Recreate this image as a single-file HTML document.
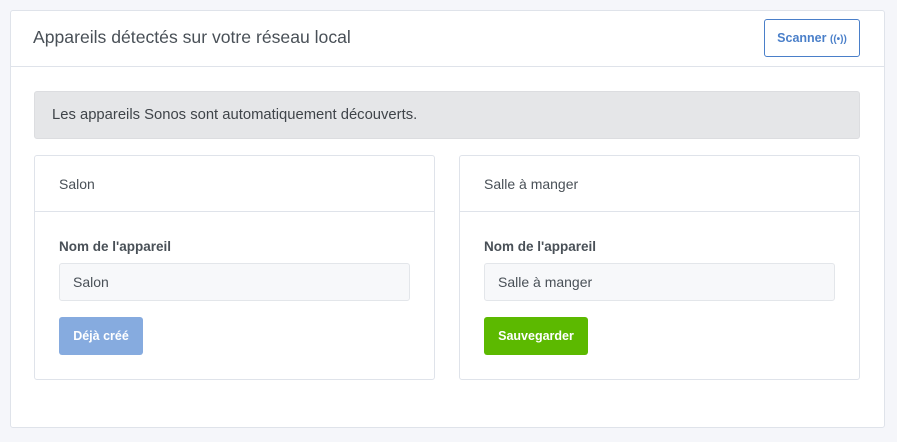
<!DOCTYPE html><html><head><style>
*{box-sizing:border-box;margin:0;padding:0}
body{width:897px;height:442px;background:#f5f6fa;font-family:"Liberation Sans",sans-serif;color:#495057;position:relative;overflow:hidden}
.a{position:absolute}
.card{left:10px;top:10px;width:875px;height:418px;background:#fff;border:1px solid #dfe3ea;border-radius:3px}
.hd{left:0;top:0;width:873px;height:56px;border-bottom:1px solid #dfe3ea}
.title{left:22px;top:16px;font-size:17.6px;color:#495057}
.scan{left:753px;top:8px;width:96px;height:38px;border:1px solid #4a7fc9;border-radius:3px;color:#4a7fc9;font-size:12.5px;font-weight:bold;line-height:36px;text-align:center}
.alert{left:23px;top:80px;width:826px;height:48px;background:#e5e6e8;border:1px solid #dcdde0;border-radius:3px;font-size:14.8px;line-height:46px;padding-left:17px;color:#3f4449}
.dc{top:144px;width:401px;height:225px;border:1px solid #dfe3ea;border-radius:3px}
.dh{left:0;top:0;width:399px;height:56px;border-bottom:1px solid #dfe3ea;font-size:14px;padding:20px 0 0 24px}
.lb{left:24px;top:83px;font-size:13.5px;font-weight:bold}
.in{left:24px;top:107px;width:351px;height:38px;background:#f7f8fa;border:1px solid #e3e6ea;border-radius:3px;font-size:14px;line-height:36px;padding-left:13px}
.bt{left:24px;top:161px;height:38px;border-radius:3px;color:#fff;font-size:12.5px;font-weight:bold;line-height:38px;text-align:center}
</style></head><body>
<div class="a card">
<div class="a hd"><div class="a title">Appareils détectés sur votre réseau local</div>
<div class="a scan">Scanner <span style="font-size:10px">((•))</span></div></div>
<div class="a alert">Les appareils Sonos sont automatiquement découverts.</div>
<div class="a dc" style="left:23px"><div class="a dh">Salon</div><div class="a lb">Nom de l'appareil</div><div class="a in">Salon</div><div class="a bt" style="width:84px;background:#86abdf">Déjà créé</div></div>
<div class="a dc" style="left:448px"><div class="a dh">Salle à manger</div><div class="a lb">Nom de l'appareil</div><div class="a in">Salle à manger</div><div class="a bt" style="width:104px;background:#5cb900">Sauvegarder</div></div>
</div>
</body></html>
